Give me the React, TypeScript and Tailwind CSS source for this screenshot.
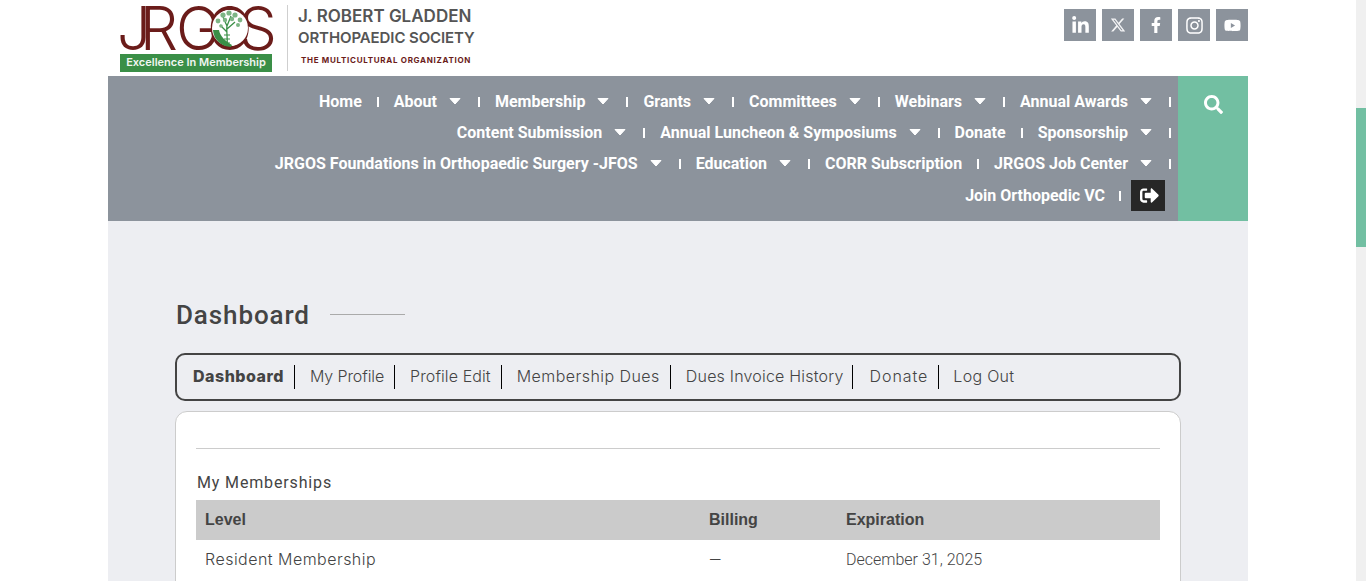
import { FaFacebookF, FaInstagram, FaLinkedinIn, FaSearch, FaSignOutAlt, FaYoutube } from 'react-icons/fa';
import { FaXTwitter } from 'react-icons/fa6';

type NavItem = { label: string; caret?: boolean };

const navRows: NavItem[][] = [
  [
    { label: 'Home' },
    { label: 'About', caret: true },
    { label: 'Membership', caret: true },
    { label: 'Grants', caret: true },
    { label: 'Committees', caret: true },
    { label: 'Webinars', caret: true },
    { label: 'Annual Awards', caret: true },
  ],
  [
    { label: 'Content Submission', caret: true },
    { label: 'Annual Luncheon & Symposiums', caret: true },
    { label: 'Donate' },
    { label: 'Sponsorship', caret: true },
  ],
  [
    { label: 'JRGOS Foundations in Orthopaedic Surgery -JFOS', caret: true },
    { label: 'Education', caret: true },
    { label: 'CORR Subscription' },
    { label: 'JRGOS Job Center', caret: true },
  ],
];

const tabs = [
  { label: 'My Profile', cls: 'pr-[10px] pl-[15px] tracking-[-0.1px] border-r' },
  { label: 'Profile Edit', cls: 'pr-[10px] pl-[15px] tracking-[0.1px] border-r' },
  { label: 'Membership Dues', cls: 'pr-[10px] pl-[15px] tracking-[0.45px] border-r' },
  { label: 'Dues Invoice History', cls: 'pr-[8px] pl-[15px] tracking-[0.2px] border-r' },
  { label: 'Donate', cls: 'pr-[10px] pl-[17px] tracking-[0.95px] border-r' },
  { label: 'Log Out', cls: 'pr-[10px] pl-[14px] tracking-[0.3px]' },
];

const socials = [
  { name: 'linkedin', icon: <FaLinkedinIn size={19} /> },
  { name: 'x', icon: <FaXTwitter size={16} className="opacity-90" /> },
  { name: 'facebook', icon: <FaFacebookF size={16} /> },
  { name: 'instagram', icon: <FaInstagram size={19} /> },
  { name: 'youtube', icon: <FaYoutube size={17} /> },
];

const Logo = () => (
  <svg width="156" height="49" viewBox="0 0 156 49" className="block overflow-visible">
    <text
      y="45"
      x="-3 20 56 87 119"
      fontFamily="Inter, sans-serif"
      fontWeight="300"
      fontSize="60"
      fill="#6b1c1a"
    >
      JRGOS
    </text>
    {/* tree inside the O */}
    <circle cx="110" cy="23" r="18" fill="#fff" />
    <path d="M93 25 A18 18 0 0 0 111 42 L112 40 C105 36 100 31 99 25 Z" fill="#3a8f47" />
    <path
      d="M107 40 C108 33 106 28 107 19 M107 27 L100 20 M107 24 L115 17 M107 21 L103 12 M107 21 L111 11"
      stroke="#3a8f47"
      strokeWidth="1.3"
      fill="none"
    />
    <path d="M104 30 H110 M104 34 H110 M104 38 H110" stroke="#3a8f47" strokeWidth="1.1" />
    <g fill="#7db585">
      <circle cx="98" cy="16" r="2.4" />
      <circle cx="103" cy="10" r="2.6" />
      <circle cx="109" cy="8" r="2.6" />
      <circle cx="115" cy="10" r="2.6" />
      <circle cx="120" cy="15" r="2.4" />
      <circle cx="105" cy="15" r="2.2" />
      <circle cx="112" cy="14" r="2.2" />
      <circle cx="118" cy="20" r="2" />
      <circle cx="101" cy="21" r="1.8" />
    </g>
  </svg>
);

export default function App() {
  return (
    <div className="flex h-[581px] overflow-hidden bg-white font-['Roboto',sans-serif]">
      <div className="flex-1 min-w-0">
        <div className="mx-auto w-[1140px]">
          <header className="flex h-[76px] justify-between pl-3">
            <div className="flex items-start pt-[5px]">
              <div className="w-[156px]">
                <Logo />
                <div className="h-[18px] w-[152px] bg-[#3a8f47] text-center text-[11px] leading-[17px] font-semibold text-[#f2f6f2] font-['Inter',sans-serif]">
                  Excellence In Membership
                </div>
              </div>
              <div className="ml-[11px] h-[66px] w-px bg-[#cfcfcf]" />
              <div className="ml-[10px] text-[#555] font-['Inter',sans-serif]">
                <div className="text-[17px] leading-[22px] font-semibold">J. ROBERT GLADDEN</div>
                <div className="text-[15px] leading-[22px] font-semibold tracking-[-0.1px]">ORTHOPAEDIC SOCIETY</div>
                <div className="mt-[5px] pl-[3px] text-[8px] leading-[12px] font-bold tracking-[0.7px] text-[#6b1c1a]">
                  THE MULTICULTURAL ORGANIZATION
                </div>
              </div>
            </div>
            <div className="flex gap-[6px] pt-[9px]">
              {socials.map((s) => (
                <a key={s.name} className="flex h-8 w-8 items-center justify-center bg-[#8c939c] text-white">
                  {s.icon}
                </a>
              ))}
            </div>
          </header>

          <nav className="flex h-[145px]">
            <div className="flex-1 bg-[#8c939c] pt-[10px] pr-[7px] text-[16px] font-bold text-white">
              {navRows.map((row, i) => (
                <div key={i} className="flex h-[31px] items-center justify-end gap-x-[15px]">
                  {row.map((item) => (
                    <div key={item.label} className="flex items-center">
                      <span className="whitespace-nowrap">{item.label}</span>
                      {item.caret && (
                        <svg width="12" height="7" viewBox="0 0 12 7" className="mr-[2px] ml-[12px]">
                          <path d="M1 0.5 H11 L6 6 Z" fill="#fff" stroke="#fff" strokeLinejoin="round" />
                        </svg>
                      )}
                      <span className="ml-[15px] h-[10px] w-[2px] bg-white" />
                    </div>
                  ))}
                </div>
              ))}
              <div className="flex h-[33px] items-center justify-end pt-px pr-[6px]">
                <span className="whitespace-nowrap">Join Orthopedic VC</span>
                <span className="ml-[14px] h-[10px] w-[2px] bg-white" />
                <a className="ml-[10px] flex h-[31px] w-[34px] -translate-y-px items-center justify-center bg-[#272727] pl-[3px]">
                  <FaSignOutAlt size={19} />
                </a>
              </div>
            </div>
            <div className="flex w-[70px] justify-center bg-[#72bfa2] pt-[19px] text-white">
              <FaSearch size={19} />
            </div>
          </nav>

          <main className="h-[360px] bg-[#edeef2] px-[67px] pt-[78px]">
            <div className="flex h-[32px] items-center pl-px">
              <h1 className="text-[26px] leading-[32px] font-medium tracking-[0.9px] text-[#444]">Dashboard</h1>
              <span className="-mt-px ml-[20px] h-px w-[75px] bg-[#aaa]" />
            </div>
            <div className="mt-[22px] flex h-[48px] items-center rounded-[10px] border-2 border-[#444] pl-4 text-[16px] text-[#444] font-['Inter',sans-serif]">
              <span className="border-r border-black pr-[10px] leading-[24px] font-extrabold tracking-[0.5px]">
                <span className="relative -top-px">Dashboard</span>
              </span>
              {tabs.map((t) => (
                <span key={t.label} className={`border-black leading-[24px] font-light whitespace-nowrap ${t.cls}`}>
                  <span className="relative -top-px">{t.label}</span>
                </span>
              ))}
            </div>
            <section className="mt-[10px] h-[200px] rounded-t-[12px] border border-[#ccc] bg-white px-[20px] pt-[36px]">
              <hr className="border-[#ccc]" />
              <h2 className="mt-[23px] pl-px text-[16px] leading-[22px] tracking-[0.85px] text-[#444]">My Memberships</h2>
              <div className="mt-[6px] grid h-[40px] grid-cols-[504px_137px_1fr] items-center bg-[#cbcbcb] text-[16px] font-bold text-[#444] font-['Liberation_Sans',sans-serif]">
                <span className="pl-[9px]">Level</span>
                <span className="pl-[9px]">Billing</span>
                <span className="pl-[9px]">Expiration</span>
              </div>
              <div className="grid h-[38px] grid-cols-[504px_137px_1fr] items-center text-[16px] text-[#444]">
                <span className="pl-[9px] font-light tracking-[0.47px] font-['Inter',sans-serif]">Resident Membership</span>
                <span className="relative top-[2px] pl-[9px] font-light">—</span>
                <span className="relative top-px pl-[9px] font-light">December 31, 2025</span>
              </div>
            </section>
          </main>
        </div>
      </div>
      <aside className="w-[10px] shrink-0 bg-[#f0f0f0] pt-[108px]">
        <div className="h-[139px] bg-[#72bfa2]" />
      </aside>
    </div>
  );
}
